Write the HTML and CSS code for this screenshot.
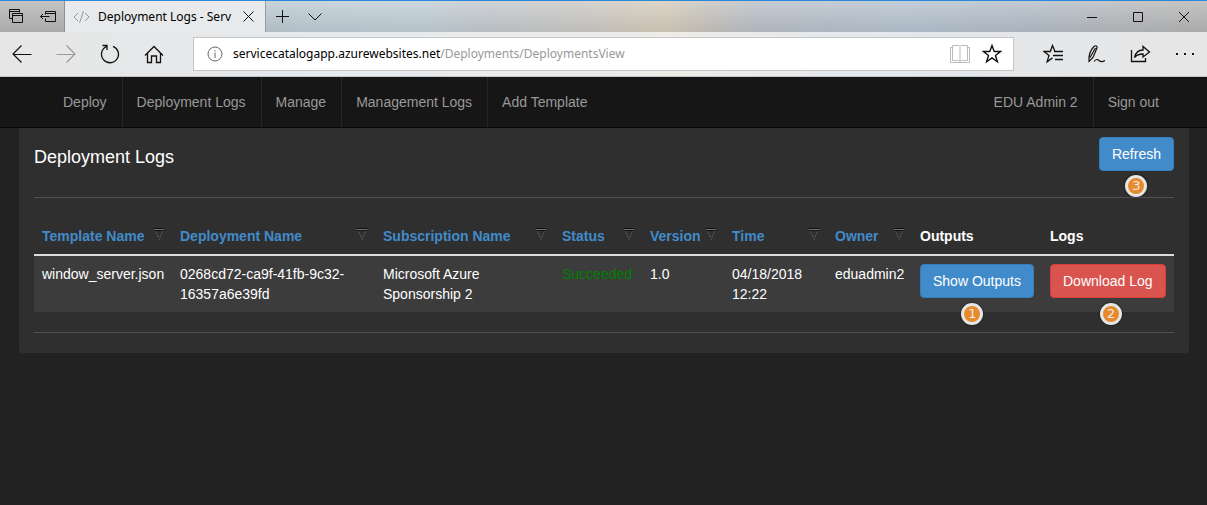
FILE: index.html
```html
<!DOCTYPE html>
<html lang="en">
<head>
<meta charset="utf-8">
<title>Deployment Logs</title>
<link rel="stylesheet" href="styles.css">
</head>
<body>
<svg class="sprite" aria-hidden="true">
  <symbol id="funnel" viewBox="0 0 10 13">
    <path d="M0 .5h10" stroke="#0c0c0c"/>
    <path d="M0 1.5h10" stroke="#777"/>
    <path d="M0 2.5h10" stroke="#111"/>
    <path d="M1 3l3 5v2M9 3l-3 5v2M4.500 11.500h1.500" fill="none" stroke="#5a5a5a" stroke-width=".8"/>
  </symbol>
</svg>

<header class="browser">
  <div class="tabstrip">
    <div class="tab-tools">
      <button class="icon-btn" aria-label="Tabs set aside"><svg width="15" height="15" viewBox="0 0 15 15"><path d="M3.500 9.500h-3v-9h10v3M.5 2.500h10M3.500 4.500h10v9h-10zM3.500 6.500h10"/></svg></button>
      <button class="icon-btn" aria-label="Set tabs aside"><svg width="16" height="12" viewBox="0 0 16 12"><path d="M5.500 3.500v-3h10v10h-10v-3M5.500 2.500h10M.5 5.500h9M3 3L.5 5.500 3 8"/></svg></button>
    </div>
    <div class="tab">
      <svg class="code" width="17" height="12" viewBox="0 0 17 12"><path d="M5 2L1 6l4 4M12 2l4 4-4 4M10.500 0l-4 12"/></svg>
      <span class="tab-title">Deployment Logs - Serv</span>
      <button class="icon-btn" aria-label="Close tab"><svg width="11" height="11" viewBox="0 0 11 11"><path d="M.5.5l10 10M10.500.5l-10 10"/></svg></button>
    </div>
    <div class="tab-new">
      <button class="icon-btn" aria-label="New tab"><svg width="13" height="13" viewBox="0 0 13 13"><path d="M6.500 0v13M0 6.500h13"/></svg></button>
      <button class="icon-btn" aria-label="Tab previews"><svg width="14" height="8" viewBox="0 0 14 8"><path d="M.5.5L7 7l6.500-6.500"/></svg></button>
    </div>
    <div class="window-buttons">
      <button class="icon-btn" aria-label="Minimize"><svg width="10" height="10" viewBox="0 0 10 10"><path d="M0 5.500h10"/></svg></button>
      <button class="icon-btn" aria-label="Maximize"><svg width="10" height="10" viewBox="0 0 10 10"><path d="M.5.5h9v9h-9z"/></svg></button>
      <button class="icon-btn" aria-label="Close"><svg width="10" height="10" viewBox="0 0 10 10"><path d="M0 0l10 10M10 0L0 10"/></svg></button>
    </div>
  </div>
  <div class="toolbar">
    <div class="history">
      <button class="icon-btn" aria-label="Back"><svg width="20" height="18" viewBox="0 0 20 18"><path d="M9.500.5L1 9l8.500 8.500M1 9.500h18.500" stroke-width="1.200"/></svg></button>
      <button class="icon-btn faded" aria-label="Forward"><svg width="20" height="18" viewBox="0 0 20 18"><path d="M10.500.5L19 9l-8.500 8.500M19 9.500H.5" stroke-width="1.200"/></svg></button>
      <button class="icon-btn" aria-label="Reload"><svg width="20" height="20" viewBox="0 0 20 20"><path d="M13 2.300A8.500 8.500 0 1 1 6.500 2.500M2.500 1.500h4.500v4.500" stroke-width="1.300"/></svg></button>
      <button class="icon-btn" aria-label="Home"><svg width="20" height="19" viewBox="0 0 20 19"><path d="M1 10.500L10 1.500l9 9M3.500 8.500V17.500h4V11h5v6.500h4V8.500" stroke-width="1.300"/></svg></button>
    </div>
    <div class="address">
      <svg class="info" width="16" height="16" viewBox="0 0 16 16"><circle cx="8" cy="8" r="7"/><path d="M8 6.500V12M8 4v1.300"/></svg>
      <span class="url">servicecatalogapp.azurewebsites.net<span class="path">/Deployments/DeploymentsView</span></span>
      <button class="icon-btn reading" aria-label="Reading view"><svg width="20" height="18" viewBox="0 0 20 18"><path d="M10 1.500c-.5-.7-1-1-2-1H2.500v15H8c1 0 1.500.3 2 1 .5-.7 1-1 2-1h5.500v-15H12c-1 0-1.500.3-2 1zv15M2.500 2.500h-2v15h19v-15h-2"/></svg></button>
      <button class="icon-btn" aria-label="Add to favorites"><svg width="20" height="20" viewBox="0 0 20 20"><path d="M10 1.500l2.200 6h6.300l-5 3.900 1.900 6.400-5.400-3.900-5.400 3.900 1.900-6.400-5-3.900h6.300z" stroke-width="1.400"/></svg></button>
    </div>
    <div class="actions">
      <button class="icon-btn" aria-label="Favorites hub"><svg width="20" height="20" viewBox="0 0 20 20"><path d="M12 7.500L9.500 1.500l-2.200 6H1l5 3.900-1.900 6.400 5.400-3.900M11 7.500h9M10 11.500h10M12 15.500h8" stroke-width="1.300"/></svg></button>
      <button class="icon-btn" aria-label="Add notes"><svg width="19" height="20" viewBox="0 0 19 20"><path d="M2 17.500C1.500 12 3.500 6 7 2.500c1.500-1.500 3.800-.5 3 1.500L6 13.500 2 17.500zM3 13.500L8.500 4M7 17.500c2-2.500 3.500-2.500 5-1s3.500 1.500 6 0" stroke-width="1.200"/></svg></button>
      <button class="icon-btn" aria-label="Share"><svg width="21" height="18" viewBox="0 0 21 18"><path d="M1.500 5v11.500h14V13M4.500 12.500C5.500 8 8.500 5 13 5V1.500L19.500 7 13 12V9c-4 0-6.500 1-8.500 3.500z" stroke-width="1.300"/></svg></button>
      <button class="icon-btn" aria-label="More"><svg width="20" height="4" viewBox="0 0 20 4"><path d="M1 1h2v2H1zM9 1h2v2H9zM17 1h2v2h-2z" fill="#111" stroke="none"/></svg></button>
    </div>
  </div>
</header>

<nav class="navbar">
  <div class="nav-group">
    <a href="#">Deploy</a><a href="#">Deployment Logs</a><a href="#">Manage</a><a href="#">Management Logs</a><a href="#">Add Template</a>
  </div>
  <div class="nav-group">
    <a href="#">EDU Admin 2</a><a href="#">Sign out</a>
  </div>
</nav>

<main class="panel">
  <div class="panel-head">
    <h1>Deployment Logs</h1>
    <span class="callout"><button class="btn primary">Refresh</button><span class="badge">3</span></span>
  </div>
  <hr>
  <table>
    <colgroup><col class="c-template"><col><col class="c-subscription"><col class="c-status"><col class="c-version"><col class="c-time"><col class="c-owner"><col class="c-outputs"><col class="c-logs"></colgroup>
    <thead>
      <tr>
        <th><div class="th"><a href="#">Template Name</a><svg><use href="#funnel"/></svg></div></th>
        <th><div class="th"><a href="#">Deployment Name</a><svg><use href="#funnel"/></svg></div></th>
        <th><div class="th"><a href="#">Subscription Name</a><svg><use href="#funnel"/></svg></div></th>
        <th><div class="th"><a href="#">Status</a><svg><use href="#funnel"/></svg></div></th>
        <th><div class="th"><a href="#">Version</a><svg><use href="#funnel"/></svg></div></th>
        <th><div class="th"><a href="#">Time</a><svg><use href="#funnel"/></svg></div></th>
        <th><div class="th"><a href="#">Owner</a><svg><use href="#funnel"/></svg></div></th>
        <th>Outputs</th>
        <th>Logs</th>
      </tr>
    </thead>
    <tbody>
      <tr>
        <td>window_server.json</td>
        <td>0268cd72-ca9f-41fb-9c32-16357a6e39fd</td>
        <td>Microsoft Azure Sponsorship 2</td>
        <td class="ok">Succeeded</td>
        <td>1.0</td>
        <td>04/18/2018 12:22</td>
        <td>eduadmin2</td>
        <td><span class="callout outputs"><button class="btn primary">Show Outputs</button><span class="badge">1</span></span></td>
        <td><span class="callout logs"><button class="btn danger">Download Log</button><span class="badge">2</span></span></td>
      </tr>
    </tbody>
  </table>
  <hr>
</main>
</body>
</html>
```

FILE: styles.css
```css
* { box-sizing: border-box; }

body {
  margin: 0;
  min-height: 100vh;
  background: #222;
  color: #fff;
  font: 14px/20px "Liberation Sans", Arial, sans-serif;
}

a { text-decoration: none; }
button { font: inherit; cursor: pointer; }
.sprite { position: absolute; width: 0; height: 0; }

/* Browser chrome */
.browser {
  border-top: 1px solid #2b88d8;
  border-bottom: 1px solid #c3c5c6;
  background: linear-gradient(90deg, #e6e6e6, #e6eaed 30%, #ecebea 50%, #efece8 56%, #e4e8ec 70%, #e6e6e6);
  color: #000;
  font-family: "Noto Sans", "Open Sans", sans-serif;
}

.tabstrip {
  display: flex;
  height: 31px;
  background:
    linear-gradient(180deg, rgba(255, 255, 255, .2), rgba(0, 0, 0, .06)),
    linear-gradient(90deg, #b4b4b4 0, #b4b4b4 5%, #bccbd4 25%, #c0ced6 35%, #c2c8cd 40%, #cac8c4 48%, #d4cbba 55%, #c4c2bd 59%, #b8bfc8 63%, #b5c2cf 75%, #b2bdc8 85%, #b6b8ba 94%, #b4b4b4);
}

.icon-btn {
  display: grid;
  place-items: center;
  padding: 0;
  border: 0;
  background: none;
}
.browser svg { fill: none; stroke: #111; flex: none; }
.browser .faded svg { stroke: #999; }

.tab-tools { display: flex; width: 65px; padding-left: 9px; gap: 16px; border-right: 1px solid #8d8f91; }
.tab {
  display: flex;
  align-items: center;
  width: 201px;
  padding: 0 11px 0 8px;
  border-right: 1px solid #94a0a7;
  background: #e7e9ea;
  font-size: 12px;
}
.browser .code { stroke: #999; }
.tab-title { flex: 1; margin: 0 8px; white-space: nowrap; }
.tab-new { display: flex; padding-left: 10px; gap: 19px; }
.window-buttons { display: flex; margin-left: auto; }
.window-buttons .icon-btn { width: 46px; }

.toolbar { display: flex; align-items: center; height: 44px; }
.history { display: flex; width: 193px; padding-left: 12px; gap: 24px; }
.address {
  display: flex;
  flex: 1;
  align-items: center;
  height: 34px;
  padding: 0 11px 0 13px;
  border: 1px solid #c6c6c6;
  background: #fff;
}
.browser .info { stroke: #666; }
.url { flex: 1; margin-left: 10px; font-size: 12px; white-space: nowrap; }
.path { color: #999; }
.address .icon-btn { margin-left: 12px; }
.browser .reading svg { stroke: #bbb; }
.actions { display: flex; width: 193px; padding-left: 29px; gap: 24px; }

/* Site navigation */
.navbar {
  display: flex;
  justify-content: space-between;
  padding: 0 33px 0 49px;
  border-bottom: 1px solid #080808;
  background: #161616;
}
.nav-group { display: flex; }
.nav-group a { padding: 15px 15px 15px 14px; color: #999; }
.nav-group a + a { border-left: 1px solid #262626; }

/* Content panel */
.panel {
  margin: 0 18px 0 19px;
  padding: 9px 15px 20px;
  border-radius: 0 0 4px 4px;
  background: #2f2f2f;
}
.panel-head { display: flex; justify-content: space-between; }
h1 { margin: 10px 0 0; font-size: 18px; line-height: 20px; font-weight: 400; }
hr { height: 1px; margin: 20px 0; border: 0; background: #505050; }
.panel-head + hr { margin-top: 26px; }
.panel > hr:last-child { margin-bottom: 0; }

.btn {
  display: block;
  padding: 6px 12px;
  border: 1px solid #357ebd;
  border-radius: 4px;
  background: #428bca;
  color: #fff;
  white-space: nowrap;
}
.btn.danger { border-color: #d43f3a; background: #d9534f; }

.callout { position: relative; display: inline-block; vertical-align: top; }
.badge {
  position: absolute;
  top: 38px;
  left: 50%;
  width: 22px;
  height: 22px;
  margin-left: -11px;
  border: 3px solid #e6e6e6;
  border-radius: 50%;
  background: #e8892b;
  box-shadow: 0 0 2px #111;
  color: #eee;
  font: 13px/16px "DejaVu Sans", sans-serif;
  text-align: center;
}
.outputs .badge { left: 46%; }
.logs .badge { left: 53%; }
td .badge { top: 39px; }

/* Log table */
table { width: 100%; border-collapse: separate; border-spacing: 0; table-layout: fixed; }
.c-template { width: 138px; }
.c-subscription { width: 179px; }
.c-status { width: 88px; }
.c-version { width: 82px; }
.c-time { width: 103px; }
.c-owner { width: 85px; }
.c-outputs { width: 130px; }
.c-logs { width: 132px; }
th, td { padding: 8px; text-align: left; vertical-align: top; }
th { border-bottom: 2px solid #ddd; white-space: nowrap; }
th a { color: #428bca; }
.th { display: flex; justify-content: space-between; }
.th svg { flex: none; width: 10px; height: 13px; margin-top: 2px; }
td { height: 56px; background: #3c3c3c; }
td .callout { margin-bottom: -10px; }
td.ok { color: green; }
```
